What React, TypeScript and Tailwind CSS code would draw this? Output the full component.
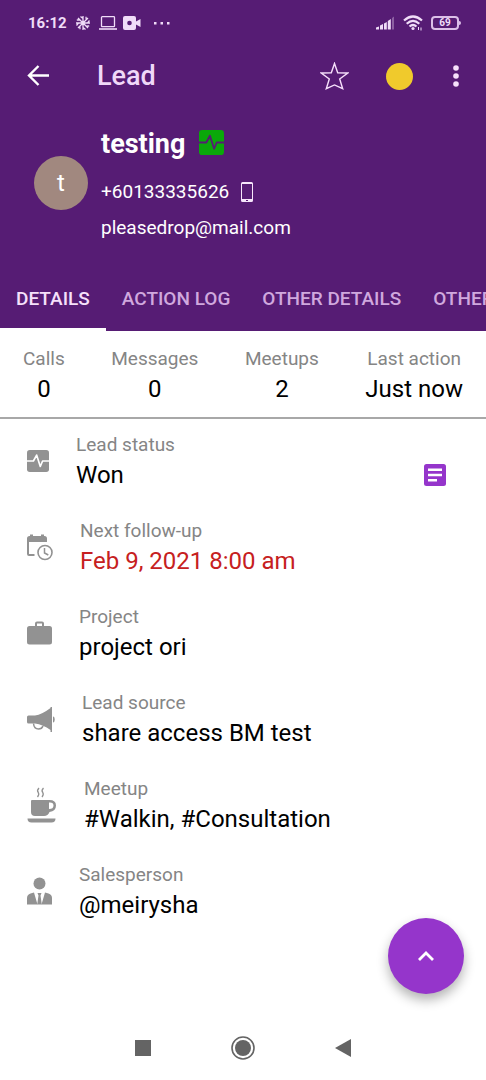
import { useState } from "react";
import type { ReactNode } from "react";

const tabs = ["DETAILS", "ACTION LOG", "OTHER DETAILS", "OTHERS"];

const stats = [
  { label: "Calls", value: "0" },
  { label: "Messages", value: "0" },
  { label: "Meetups", value: "2" },
  { label: "Last action", value: "Just now" },
];

function PulseIcon({ className }: { className?: string }) {
  return (
    <svg viewBox="0 0 24 24" className={className} aria-hidden="true">
      <rect width="24" height="24" rx="3" fill="currentColor" />
      <path
        d="M0 12h7l3.500-6.500 4 12.500 2.500-6H24"
        fill="none"
        className="stroke-(--pulse)"
        strokeWidth="1.800"
        strokeLinejoin="round"
      />
    </svg>
  );
}

function CalendarClockIcon() {
  return (
    <svg viewBox="0 0 26 27" className="h-[27px] w-[26px]" aria-hidden="true">
      <path d="M0 4.500Q0 2 2.500 2H3V.5h3V2h8V.5h3V2h.5Q20 2 20 4.500V8H2v12h5.500v2H2q-2 0-2-2z" fill="currentColor" />
      <circle cx="18" cy="18.500" r="7" fill="none" stroke="currentColor" strokeWidth="1.600" />
      <path d="M17.500 14v5l3.800 2" fill="none" stroke="currentColor" strokeWidth="1.500" />
    </svg>
  );
}

function BriefcaseIcon() {
  return (
    <svg viewBox="0 0 25 24" className="h-6 w-[25px]" aria-hidden="true">
      <path
        d="M8 5V2.500Q8 .5 10 .5h5q2 0 2 2V5h5.500Q25 5 25 7.500V21q0 2.500-2.500 2.500h-20Q0 23.500 0 21V7.500Q0 5 2.500 5zm2 0h5V2.500h-5z"
        fill="currentColor"
        fillRule="evenodd"
      />
    </svg>
  );
}

function MegaphoneIcon() {
  return (
    <svg viewBox="0 0 28 25" className="h-[25px] w-7" aria-hidden="true">
      <path d="M0 10q0-1.500 1.500-1.500H8Q15 7.500 23.500 1V0H25v25h-1.500v-2Q16 17.500 8 16.500H1.500Q0 16.500 0 15z" fill="currentColor" />
      <path d="M26 9.500q1.700 0 1.700 3T26 15.500z" fill="currentColor" />
      <path d="M6.500 16.500q.5 5.500 5 5.500 3.500 0 4.500-3" fill="none" stroke="currentColor" strokeWidth="1.500" />
    </svg>
  );
}

function CoffeeIcon() {
  return (
    <svg viewBox="0 0 30 36" className="h-9 w-[30px]" aria-hidden="true">
      <path
        d="M12 1q-2.500 2.500-.7 4.500 1.200 2-.8 4.500M16.500 1q-2.500 2.500-.7 4.500 1.200 2-.8 4.500"
        fill="none"
        stroke="currentColor"
        strokeWidth="1.300"
      />
      <path
        d="M4 14q0-1 1-1h17.500q6.500 0 6.500 5.500T22.500 25q-1.500 4-5.500 4H8q-4 0-4-4zm18 1.500V22q4.500 0 4.500-3.500T22 15.500z"
        fill="currentColor"
        fillRule="evenodd"
      />
      <path d="M.5 31.500h28q0 4-4 4h-20q-4 0-4-4z" fill="currentColor" />
    </svg>
  );
}

function SalespersonIcon() {
  return (
    <svg viewBox="0 0 25 28" className="h-7 w-[25px]" aria-hidden="true">
      <circle cx="12.500" cy="6.500" r="6" fill="currentColor" />
      <path d="M0 27.500V21q0-3.500 3.500-4.500L7 15.500l3.500 12zM25 27.500V21q0-3.500-3.500-4.500L18 15.500l-3.500 12z" fill="currentColor" />
      <path d="M10.500 16h4l-1 2.500 1.300 9h-4.600l1.300-9z" fill="currentColor" />
    </svg>
  );
}

type Detail = {
  label: string;
  value: string;
  icon: ReactNode;
  alert?: boolean;
  note?: boolean;
};

const details: Detail[] = [
  {
    label: "Lead status",
    value: "Won",
    icon: <PulseIcon className="size-[22px] [--pulse:#fff]" />,
    note: true,
  },
  { label: "Next follow-up", value: "Feb 9, 2021 8:00 am", icon: <CalendarClockIcon />, alert: true },
  { label: "Project", value: "project ori", icon: <BriefcaseIcon /> },
  { label: "Lead source", value: "share access BM test", icon: <MegaphoneIcon /> },
  { label: "Meetup", value: "#Walkin, #Consultation", icon: <CoffeeIcon /> },
  { label: "Salesperson", value: "@meirysha", icon: <SalespersonIcon /> },
];

function StatusBar() {
  return (
    <div className="flex h-[46px] items-center justify-between pr-[25px] pl-7 text-[#f0dcf8]">
      <div className="flex items-center">
        <span className="text-[15px] font-bold">16:12</span>
        <svg viewBox="0 0 16 16" className="ml-2 size-4" aria-hidden="true">
          <path
            d="M8 1v14M1 8h14M3 3l10 10M13 3 3 13M8 3.500 5.500 1.500M8 12.500l2.500 2M3.500 8l-2 2.500M12.500 8l2-2.500M4.800 4.800 1.800 5M11.200 11.200l3-.2M11.200 4.800 11 1.800M4.800 11.200l.2 3"
            fill="none"
            stroke="currentColor"
            strokeWidth="1.300"
          />
        </svg>
        <svg viewBox="0 0 18 14" className="ml-2 h-3.5 w-[18px]" aria-hidden="true">
          <rect x="2.500" y=".7" width="13" height="10" rx=".8" fill="none" stroke="currentColor" strokeWidth="1.300" />
          <path d="M0 12.200h18v1.600H0z" fill="currentColor" />
        </svg>
        <svg viewBox="0 0 18 14" className="ml-[6px] h-3.5 w-[18px]" aria-hidden="true">
          <rect width="13" height="14" rx="2" fill="currentColor" />
          <path d="M13 5.500 17.500 3v8L13 8.500z" fill="currentColor" />
          <circle cx="6.500" cy="7" r="2.300" fill="#561c74" />
        </svg>
        <svg viewBox="0 0 18 4" className="ml-3 h-1 w-[18px]" aria-hidden="true">
          <path d="M1 1h2.500v2.500H1zM7.500 1H10v2.500H7.500zM14 1h2.500v2.500H14z" fill="currentColor" />
        </svg>
      </div>
      <div className="flex items-center gap-2">
        <svg viewBox="0 0 19 14" className="h-3.5 w-[19px]" aria-hidden="true">
          <path d="M0 11.500 3 10.500V13.500H0zM4 9.500l3-1.500v5.500H4zM8 7.500l2.800-1.500v7.500H8zM11.800 5l3-2v10.500h-3z" fill="currentColor" />
          <path d="M16 2l2-1.500v13h-2z" fill="currentColor" opacity=".35" />
        </svg>
        <svg viewBox="0 0 20 16" className="h-4 w-5" aria-hidden="true">
          <path d="M1 5.500q9-8 18 0M3.700 8.700q6.300-5.700 12.600 0M6.500 11.500q3.500-3 7 0" fill="none" stroke="currentColor" strokeWidth="2.200" />
          <circle cx="10" cy="13.500" r="1.600" fill="currentColor" />
          <path d="M15.500 12v3M18 12.500v3" stroke="currentColor" strokeWidth="1" />
        </svg>
        <div className="flex items-center">
          <span className="flex h-[14px] w-7 items-center justify-center rounded-[4px] border-2 border-[#dcbfe8] text-[10px] leading-none font-bold">
            69
          </span>
          <span className="h-1 w-[2px] rounded-r bg-[#dcbfe8]" />
        </div>
      </div>
    </div>
  );
}

function AppBar() {
  return (
    <div className="flex h-[60px] items-center pr-[27px] pl-[27px]">
      <button type="button" aria-label="Back">
        <svg viewBox="0 0 22 22" className="size-[22px]" aria-hidden="true">
          <path d="M22 10.500H2M11.500 1 2 10.500 11.500 20" fill="none" stroke="#fff" strokeWidth="2.400" />
        </svg>
      </button>
      <h1 className="ml-[48px] grow text-[27px] font-medium text-[#f0d8f8]">Lead</h1>
      <button type="button" aria-label="Add to favourites">
        <svg viewBox="0 0 29 29" className="size-[29px]" aria-hidden="true">
          <path
            d="M14.500 1.500 17.700 10.800 27.800 11 19.700 17 22.700 26.700 14.500 22.900 6.300 26.700 9.300 17 1.200 11 11.300 10.800z"
            fill="none"
            stroke="#f6e0fb"
            strokeWidth="1.400"
          />
        </svg>
      </button>
      <button type="button" aria-label="Priority" className="ml-[37px] size-[27px] rounded-full bg-[#f0ca2c]" />
      <button type="button" aria-label="More options" className="ml-10">
        <svg viewBox="0 0 6 22" className="h-[22px] w-[6px]" aria-hidden="true">
          <g fill="#f6e0fb">
            <circle cx="3" cy="3" r="2.800" />
            <circle cx="3" cy="11" r="2.800" />
            <circle cx="3" cy="19" r="2.800" />
          </g>
        </svg>
      </button>
    </div>
  );
}

function Contact() {
  return (
    <div className="flex items-start gap-[13px] px-[34px] pt-5 pb-[22px]">
      <div className="mt-[30px] flex size-[54px] shrink-0 items-center justify-center rounded-full bg-[#a1887f] text-[24px] text-white">
        t
      </div>
      <div className="text-[19px] text-white">
        <div className="flex h-9 items-center gap-[14px]">
          <h2 className="text-[27px] font-bold">testing</h2>
          <PulseIcon className="mb-1 size-[25px] text-[#0aa80a] [--pulse:#561c74]" />
        </div>
        <div className="mt-3 flex h-9 items-center gap-3">
          <a href="tel:+60133335626">+60133335626</a>
          <svg viewBox="0 0 12 20" className="h-5 w-3" aria-hidden="true">
            <path
              d="M1.500 0h9Q12 0 12 1.500v17q0 1.500-1.500 1.500h-9Q0 20 0 18.500v-17Q0 0 1.500 0zM1 2v15h10V2zM5 18v1h2v-1z"
              fill="#f6e6fb"
              fillRule="evenodd"
            />
          </svg>
        </div>
        <div className="flex h-9 items-center">
          <a href="mailto:pleasedrop@mail.com">pleasedrop@mail.com</a>
        </div>
      </div>
    </div>
  );
}

export default function App() {
  const [activeTab, setActiveTab] = useState("DETAILS");

  return (
    <div className="flex min-h-screen flex-col bg-white font-[Roboto,sans-serif]">
      <header className="bg-[#561c74]">
        <StatusBar />
        <AppBar />
        <Contact />
        <nav className="flex h-[63px] overflow-x-auto [scrollbar-width:none]">
          {tabs.map((tab) => (
            <button
              key={tab}
              type="button"
              onClick={() => setActiveTab(tab)}
              className={
                tab === activeTab
                  ? "shrink-0 border-y-3 border-t-transparent border-b-white px-4 text-[19px] font-medium text-[#f6e0fb]"
                  : "shrink-0 border-y-3 border-transparent px-4 text-[19px] font-medium text-[#d0a8de]"
              }
            >
              {tab}
            </button>
          ))}
        </nav>
      </header>

      <section className="flex justify-between border-b-2 border-[#a8a8a8] px-[23px] pt-[14px] pb-3 text-center">
        {stats.map((stat) => (
          <div key={stat.label}>
            <p className="text-[19px] leading-7 text-[#858585]">{stat.label}</p>
            <p className="text-[24px] leading-8 text-black">{stat.value}</p>
          </div>
        ))}
      </section>

      <main className="flex flex-col gap-[26px] px-[27px] pt-3">
        {details.map((detail) => (
          <div key={detail.label} className="flex h-15 items-center">
            <div className="mr-[27px] text-[#929292]">{detail.icon}</div>
            <div className="grow">
              <p className="text-[19px] leading-7 text-[#858585]">{detail.label}</p>
              <p className={detail.alert ? "text-[24px] leading-8 text-[#c62020]" : "text-[24px] leading-8 text-black"}>
                {detail.value}
              </p>
            </div>
            {detail.note && (
              <button type="button" aria-label="Notes" className="mt-7 mr-[13px]">
                <svg viewBox="0 0 22 22" className="size-[22px]" aria-hidden="true">
                  <rect width="22" height="22" rx="2.500" fill="#9535cb" />
                  <path d="M4 4.500h14V7H4zM4 9.800h14v2.500H4zM4 15h9v2.500H4z" fill="#fff" />
                </svg>
              </button>
            )}
          </div>
        ))}
      </main>

      <button
        type="button"
        aria-label="Show actions"
        className="fixed right-[22px] bottom-[86px] flex size-[76px] items-center justify-center rounded-full bg-[#9535cb] shadow-[0_6px_12px_rgba(0,0,0,0.3)]"
      >
        <svg viewBox="0 0 16 10" className="h-[10px] w-4" aria-hidden="true">
          <path d="M1 9 8 2l7 7" fill="none" stroke="#fff" strokeWidth="2.800" />
        </svg>
      </button>

      <footer className="mt-auto flex h-16 items-center justify-center gap-[80px] text-[#646464]">
        <button type="button" aria-label="Recent apps">
          <svg viewBox="0 0 16 16" className="size-4" aria-hidden="true">
            <path d="M0 0h16v16H0z" fill="currentColor" />
          </svg>
        </button>
        <button type="button" aria-label="Home">
          <svg viewBox="0 0 24 24" className="size-6" aria-hidden="true">
            <circle cx="12" cy="12" r="11" fill="none" stroke="currentColor" strokeWidth="1.600" />
            <circle cx="12" cy="12" r="8" fill="currentColor" />
          </svg>
        </button>
        <button type="button" aria-label="Back to previous app">
          <svg viewBox="0 0 16 18" className="h-[18px] w-4" aria-hidden="true">
            <path d="M16 0v18L0 9z" fill="currentColor" />
          </svg>
        </button>
      </footer>
    </div>
  );
}
